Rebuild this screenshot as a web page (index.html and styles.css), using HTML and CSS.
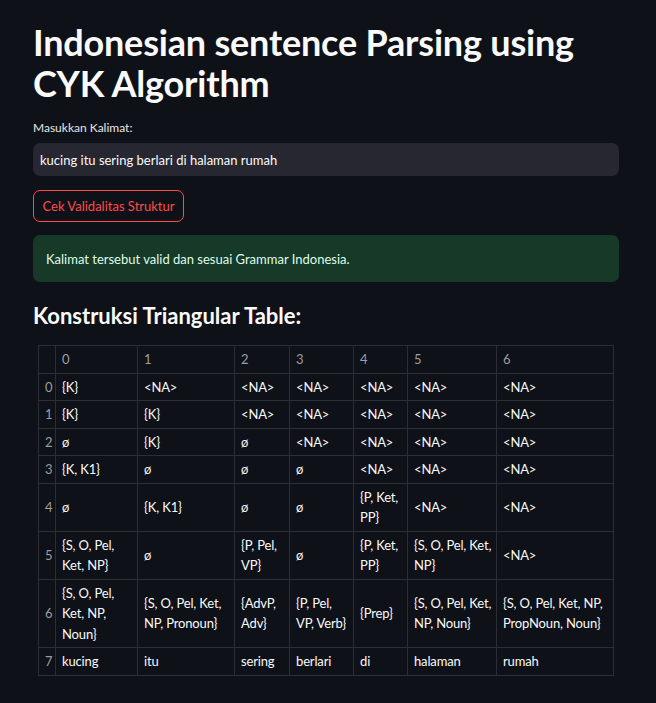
FILE: index.html
```html
<!DOCTYPE html>
<html lang="id">
<head>
<meta charset="utf-8">
<title>Indonesian sentence Parsing using CYK Algorithm</title>
<link rel="stylesheet" href="styles.css">
</head>
<body>
<main class="app">
  <h1 class="title">Indonesian sentence Parsing using CYK Algorithm</h1>
  <label class="label" for="kalimat">Masukkan Kalimat:</label>
  <div class="input" id="kalimat">kucing itu sering berlari di halaman rumah</div>
  <div class="btn-row"><button class="btn">Cek Validalitas Struktur</button></div>
  <div class="success">Kalimat tersebut valid dan sesuai Grammar Indonesia.</div>
  <h3 class="subtitle">Konstruksi Triangular Table:</h3>
  <table class="grid">
    <colgroup>
      <col class="c-idx"><col class="c0"><col class="c1"><col class="c2"><col class="c3"><col class="c4"><col class="c5"><col class="c6">
    </colgroup>
    <thead>
      <tr><th class="idx"></th><th>0</th><th>1</th><th>2</th><th>3</th><th>4</th><th>5</th><th>6</th></tr>
    </thead>
    <tbody>
      <tr><th class="idx">0</th><td>{K}</td><td>&lt;NA&gt;</td><td>&lt;NA&gt;</td><td>&lt;NA&gt;</td><td>&lt;NA&gt;</td><td>&lt;NA&gt;</td><td>&lt;NA&gt;</td></tr>
      <tr><th class="idx">1</th><td>{K}</td><td>{K}</td><td>&lt;NA&gt;</td><td>&lt;NA&gt;</td><td>&lt;NA&gt;</td><td>&lt;NA&gt;</td><td>&lt;NA&gt;</td></tr>
      <tr><th class="idx">2</th><td>ø</td><td>{K}</td><td>ø</td><td>&lt;NA&gt;</td><td>&lt;NA&gt;</td><td>&lt;NA&gt;</td><td>&lt;NA&gt;</td></tr>
      <tr><th class="idx">3</th><td>{K, K1}</td><td>ø</td><td>ø</td><td>ø</td><td>&lt;NA&gt;</td><td>&lt;NA&gt;</td><td>&lt;NA&gt;</td></tr>
      <tr><th class="idx">4</th><td>ø</td><td>{K, K1}</td><td>ø</td><td>ø</td><td>{P, Ket,<br>PP}</td><td>&lt;NA&gt;</td><td>&lt;NA&gt;</td></tr>
      <tr><th class="idx">5</th><td>{S, O, Pel,<br>Ket, NP}</td><td>ø</td><td>{P, Pel,<br>VP}</td><td>ø</td><td>{P, Ket,<br>PP}</td><td>{S, O, Pel, Ket,<br>NP}</td><td>&lt;NA&gt;</td></tr>
      <tr><th class="idx">6</th><td>{S, O, Pel,<br>Ket, NP,<br>Noun}</td><td>{S, O, Pel, Ket,<br>NP, Pronoun}</td><td>{AdvP,<br>Adv}</td><td>{P, Pel,<br>VP, Verb}</td><td>{Prep}</td><td>{S, O, Pel, Ket,<br>NP, Noun}</td><td>{S, O, Pel, Ket, NP,<br>PropNoun, Noun}</td></tr>
      <tr><th class="idx">7</th><td>kucing</td><td>itu</td><td>sering</td><td>berlari</td><td>di</td><td>halaman</td><td>rumah</td></tr>
    </tbody>
  </table>
</main>
</body>
</html>
```

FILE: styles.css
```css
html, body {
  margin: 0;
  padding: 0;
  background: #0e1117;
}

body {
  color: #fafafa;
  font-family: Lato, "Open Sans", "Noto Sans", sans-serif;
}

.app {
  width: 586px;
  padding: 22px 37px 40px 33px;
  display: flex;
  flex-direction: column;
}

.title {
  margin: 0;
  font-size: 36px;
  line-height: 41px;
  font-weight: 700;
  letter-spacing: -0.2px;
}

.label {
  margin-top: 16px;
  font-size: 12px;
  line-height: 16px;
  color: #e6e6e6;
}

.input {
  margin-top: 7px;
  height: 33px;
  box-sizing: border-box;
  padding: 0 7px;
  display: flex;
  align-items: center;
  background: #262730;
  border-radius: 7px;
  font-size: 13px;
}

.btn-row {
  margin-top: 14px;
  display: flex;
}

.btn {
  height: 32px;
  width: 151px;
  box-sizing: border-box;
  background: transparent;
  border: 1px solid #ff4b4b;
  border-radius: 7px;
  color: #ff4b4b;
  font-family: inherit;
  font-size: 13px;
  padding: 0;
}

.success {
  margin-top: 13px;
  height: 47px;
  box-sizing: border-box;
  padding: 0 13px;
  display: flex;
  align-items: center;
  background: #173928;
  border-radius: 7px;
  color: #dffde9;
  font-size: 13px;
}

.subtitle {
  margin: 19px 0 0;
  font-size: 22px;
  line-height: 30px;
  font-weight: 700;
}

.grid {
  margin: 14px 0 0 5px;
  width: 575px;
  table-layout: fixed;
  border-collapse: collapse;
  font-size: 13px;
  line-height: 20.5px;
  letter-spacing: -0.15px;
}

.c-idx { width: 17px; }
.c0 { width: 82px; }
.c1 { width: 97px; }
.c2 { width: 55px; }
.c3 { width: 64px; }
.c4 { width: 54px; }
.c5 { width: 89px; }
.c6 { width: 117px; }

.grid th,
.grid td {
  border: 1px solid #2b2e35;
  padding: 3px 6px;
  text-align: left;
  vertical-align: middle;
  white-space: nowrap;
}

.grid thead th {
  height: 20px;
  color: #9c9da1;
  font-weight: 400;
}

.grid th.idx {
  color: #9c9da1;
  font-weight: 400;
  padding: 0 0 0 6px;
}

.grid td {
  color: #fafafa;
}
```
